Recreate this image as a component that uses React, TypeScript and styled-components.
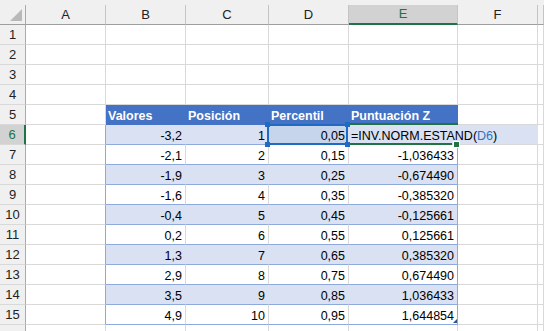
import React from 'react';
import styled, { createGlobalStyle, css } from 'styled-components';

const GRID = '#d9d9d9';
const TABLE_LINE = '#8ea9db';
const TABLE_HEAD = '#4472c4';
const BAND = '#d9e1f2';
const SELECT_GREEN = '#217346';
const REF_BLUE = '#1f6bc4';
const COLUMNS = '26px 80px 80px 83px 80px 109px 80px 1fr';

const GlobalStyle = createGlobalStyle`
  html, body {
    margin: 0;
    padding: 0;
    background: #ffffff;
  }
  body {
    font-family: 'Liberation Sans', Arial, sans-serif;
    font-size: 12.5px;
    color: #000;
    overflow: hidden;
  }
`;

const Sheet = styled.div`
  width: 544px;
  height: 331px;
  overflow: hidden;
  display: flex;
  flex-direction: column;
`;

const TopStrip = styled.div`
  height: 5px;
  flex: none;
  background: #f0f0f0;
`;

const Row = styled.div`
  display: grid;
  grid-template-columns: ${COLUMNS};
  height: 20px;
  flex: none;
`;

const baseCell = css`
  box-sizing: border-box;
  height: 20px;
  display: flex;
  align-items: flex-end;
  line-height: 14px;
  padding-bottom: 1px;
  white-space: nowrap;
  overflow: hidden;
`;

const Corner = styled.div`
  ${baseCell};
  position: relative;
  background: #f0f0f0;
  border-right: 1px solid #ababab;
  border-bottom: 1px solid #9e9e9e;

  &::after {
    content: '';
    position: absolute;
    right: 3px;
    bottom: 3px;
    border-style: solid;
    border-width: 0 0 12px 12px;
    border-color: transparent transparent #b9b9b9 transparent;
  }
`;

const ColHeader = styled.div<{ $active?: boolean }>`
  ${baseCell};
  justify-content: center;
  align-items: center;
  padding-bottom: 0;
  font-size: 13px;
  background: ${(p) => (p.$active ? '#d2d2d2' : '#f0f0f0')};
  color: ${(p) => (p.$active ? SELECT_GREEN : '#222')};
  border-right: 1px solid #c4c4c4;
  border-bottom: ${(p) => (p.$active ? `2px solid ${SELECT_GREEN}` : '1px solid #9e9e9e')};
`;

const RowHeader = styled.div<{ $active?: boolean }>`
  ${baseCell};
  justify-content: center;
  align-items: center;
  padding-bottom: 0;
  font-size: 13px;
  background: ${(p) => (p.$active ? '#d2d2d2' : '#f0f0f0')};
  color: ${(p) => (p.$active ? SELECT_GREEN : '#222')};
  border-right: ${(p) => (p.$active ? `2px solid ${SELECT_GREEN}` : '1px solid #ababab')};
  border-bottom: 1px solid ${GRID};
`;

const Cell = styled.div<{ $edge?: boolean }>`
  ${baseCell};
  border-right: 1px solid ${(p) => (p.$edge ? TABLE_LINE : GRID)};
  border-bottom: 1px solid ${GRID};
`;

const HeadCell = styled.div`
  ${baseCell};
  background: ${TABLE_HEAD};
  color: #ffffff;
  font-weight: bold;
  padding-left: 2px;
  border-right: 1px solid ${TABLE_HEAD};
  border-bottom: 1px solid ${TABLE_HEAD};
`;

const DataCell = styled.div<{ $band?: boolean; $last?: boolean }>`
  ${baseCell};
  position: relative;
  justify-content: flex-end;
  padding-right: 3px;
  background: ${(p) => (p.$band ? BAND : '#ffffff')};
  border-right: 1px solid
    ${(p) => (p.$last ? TABLE_LINE : p.$band ? BAND : GRID)};
  border-bottom: 1px solid ${TABLE_LINE};
`;

const RefCell = styled(DataCell)`
  background: #c6d4ec;
  overflow: visible;
  z-index: 3;
`;

const RefFrame = styled.div`
  position: absolute;
  left: -2px;
  top: -1px;
  width: 81px;
  height: 21px;
  box-sizing: border-box;
  border: 2px solid ${REF_BLUE};
  pointer-events: none;
`;

const Handle = styled.span<{ $x: 'left' | 'right'; $y: 'top' | 'bottom' }>`
  position: absolute;
  width: 5px;
  height: 5px;
  background: ${REF_BLUE};
  ${(p) => (p.$x === 'left' ? 'left: -4px;' : 'right: -4px;')}
  ${(p) => (p.$y === 'top' ? 'top: -4px;' : 'bottom: -4px;')}
`;

const EditCell = styled.div`
  ${baseCell};
  grid-column: span 2;
  position: relative;
  z-index: 2;
  overflow: visible;
  background: ${BAND};
  padding-left: 2px;
  border-bottom: 1px solid ${GRID};
`;

const EditTop = styled.span`
  position: absolute;
  left: -1px;
  top: -2px;
  width: 110px;
  height: 2px;
  background: ${SELECT_GREEN};
`;

const EditBottom = styled.span`
  position: absolute;
  left: -1px;
  bottom: -1px;
  width: 104px;
  height: 2px;
  background: ${SELECT_GREEN};
`;

const FillHandle = styled.span`
  position: absolute;
  left: 105px;
  bottom: -3px;
  width: 5px;
  height: 5px;
  background: ${SELECT_GREEN};
  box-shadow: 0 0 0 1px #ffffff;
`;

const RefText = styled.span`
  color: #2e75c6;
`;

const ResizeMark = styled.span`
  position: absolute;
  right: 0;
  bottom: 1px;
  border-style: solid;
  border-width: 0 0 4px 4px;
  border-color: transparent transparent #2f4f8f transparent;
`;

const letters = ['A', 'B', 'C', 'D', 'E', 'F'];

const data: [string, string, string, string][] = [
  ['-3,2', '1', '0,05', ''],
  ['-2,1', '2', '0,15', '-1,036433'],
  ['-1,9', '3', '0,25', '-0,674490'],
  ['-1,6', '4', '0,35', '-0,385320'],
  ['-0,4', '5', '0,45', '-0,125661'],
  ['0,2', '6', '0,55', '0,125661'],
  ['1,3', '7', '0,65', '0,385320'],
  ['2,9', '8', '0,75', '0,674490'],
  ['3,5', '9', '0,85', '1,036433'],
  ['4,9', '10', '0,95', '1,644854'],
];

function BlankRow({ n }: { n?: number }) {
  return (
    <Row>
      <RowHeader>{n}</RowHeader>
      {letters.map((l) => (
        <Cell key={l} />
      ))}
      <Cell />
    </Row>
  );
}

export default function App() {
  return (
    <>
      <GlobalStyle />
      <Sheet>
        <TopStrip />
        <Row>
          <Corner />
          {letters.map((l) => (
            <ColHeader key={l} $active={l === 'E'}>
              {l}
            </ColHeader>
          ))}
          <ColHeader />
        </Row>
        {[1, 2, 3, 4].map((n) => (
          <BlankRow key={n} n={n} />
        ))}
        <Row>
          <RowHeader>5</RowHeader>
          <Cell />
          <HeadCell>Valores</HeadCell>
          <HeadCell>Posición</HeadCell>
          <HeadCell>Percentil</HeadCell>
          <HeadCell>Puntuación Z</HeadCell>
          <Cell />
          <Cell />
        </Row>
        {data.map(([b, c, d, e], i) => {
          const n = i + 6;
          const band = i % 2 === 0;
          if (i === 0) {
            return (
              <Row key={n}>
                <RowHeader $active>{n}</RowHeader>
                <Cell $edge />
                <DataCell $band>{b}</DataCell>
                <DataCell $band>{c}</DataCell>
                <RefCell $band>
                  {d}
                  <RefFrame>
                    <Handle $x="left" $y="top" />
                    <Handle $x="right" $y="top" />
                    <Handle $x="left" $y="bottom" />
                    <Handle $x="right" $y="bottom" />
                  </RefFrame>
                </RefCell>
                <EditCell>
                  =INV.NORM.ESTAND(<RefText>D6</RefText>)
                  <EditTop />
                  <EditBottom />
                  <FillHandle />
                </EditCell>
                <Cell />
              </Row>
            );
          }
          return (
            <Row key={n}>
              <RowHeader>{n}</RowHeader>
              <Cell $edge />
              <DataCell $band={band}>{b}</DataCell>
              <DataCell $band={band}>{c}</DataCell>
              <DataCell $band={band}>{d}</DataCell>
              <DataCell $band={band} $last>
                {e}
                {n === 15 && <ResizeMark />}
              </DataCell>
              <Cell />
              <Cell />
            </Row>
          );
        })}
        <BlankRow />
      </Sheet>
    </>
  );
}
